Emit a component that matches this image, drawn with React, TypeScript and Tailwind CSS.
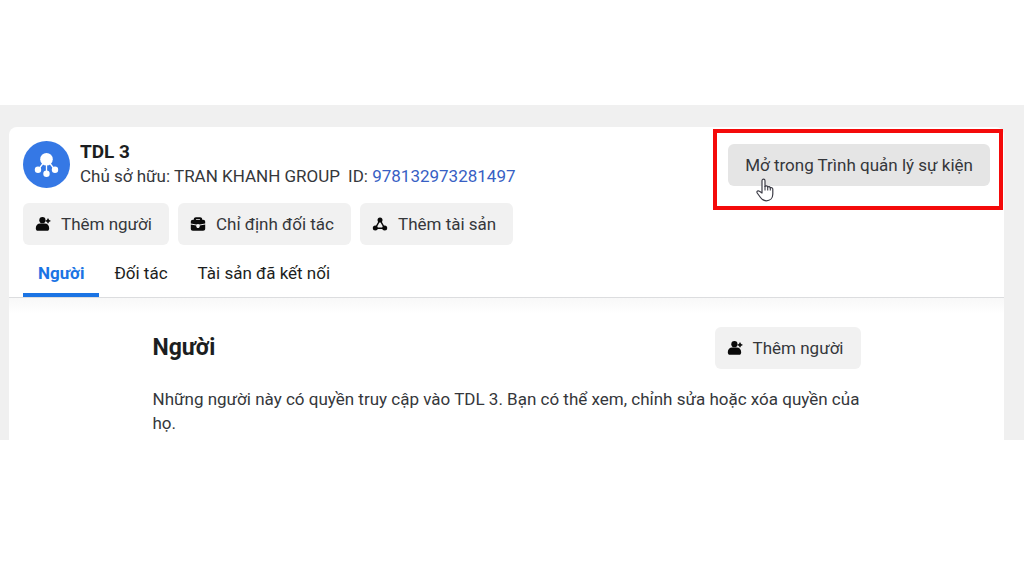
import type { ReactNode } from "react";

function AddPersonIcon() {
  return (
    <svg viewBox="0 0 16 16" className="h-4 w-4 shrink-0" fill="#0a0a0a" aria-hidden="true">
      <circle cx="7.4" cy="4.2" r="3.1" />
      <path d="M0.8 12.2c0-2.900 1.900-4.600 4.300-4.600h4.800c2.400 0 4.300 1.700 4.300 4.600 0 1.700-.8 2.600-2.200 2.600H3c-1.400 0-2.200-.9-2.200-2.600z" />
      <path d="M13 2.600l.8 1.500 1.600.8-1.600.8-.8 1.600-.8-1.600-1.600-.8 1.600-.8z" stroke="#0a0a0a" strokeWidth=".6" />
    </svg>
  );
}

function BriefcaseIcon() {
  return (
    <svg viewBox="0 0 16 16" className="h-4 w-4 shrink-0" fill="#0a0a0a" aria-hidden="true">
      <path
        fillRule="evenodd"
        d="M3.800 3.800V3.200C3.800 1.900 4.700 1.200 5.900 1.200h4.200c1.200 0 2.100.7 2.100 2v.6h.9c1.300 0 2.100.8 2.100 2v1.700L9.800 8.600 8 7.900l-1.800.7L.8 7.500V5.800c0-1.200.8-2 2.100-2zM5.900 3.800h4.200v-.3c0-.3-.2-.5-.5-.5H6.400c-.3 0-.5.2-.5.5z"
      />
      <path d="M.8 8.500l5.500 1.100v.8c0 .9.800 1.500 1.700 1.500s1.700-.6 1.700-1.500v-.8l5.500-1.100v4.200c0 1.200-.8 2-2.100 2H2.900c-1.300 0-2.100-.8-2.100-2z" />
    </svg>
  );
}

function AssetsIcon() {
  return (
    <svg viewBox="0 0 16 16" className="h-4 w-4 shrink-0" fill="#0a0a0a" aria-hidden="true">
      <path d="M8 4L3.400 12.200h9.200z" fill="none" stroke="#0a0a0a" strokeWidth="1.500" />
      <circle cx="8" cy="4" r="2.500" />
      <circle cx="3.300" cy="12.100" r="2.500" />
      <circle cx="12.700" cy="12.100" r="2.500" />
    </svg>
  );
}

function DatasetLogo() {
  return (
    <svg viewBox="0 0 47 47" className="h-[47px] w-[47px] shrink-0" aria-hidden="true">
      <circle cx="23.500" cy="23.500" r="23.500" fill="#3578e5" />
      <g stroke="#fff" strokeWidth="1.300">
        <path d="M23.500 18v15M23.500 18l-8.500 11M23.500 18l8.500 11" />
      </g>
      <g fill="#fff">
        <circle cx="23.500" cy="18.200" r="6.300" />
        <circle cx="15" cy="28.700" r="3.200" />
        <circle cx="23.500" cy="32.800" r="3.200" />
        <circle cx="32" cy="28.700" r="3.200" />
      </g>
    </svg>
  );
}

function HandPointer() {
  return (
    <svg
      viewBox="0 0 18 24"
      className="pointer-events-none absolute top-[34px] left-7 h-6 w-[18px]"
      aria-hidden="true"
    >
      <path
        d="M6 15V2.800C6 .6 9 .6 9 2.800V8.500c.6-1 2.500-.8 2.700.5.700-.8 2.300-.5 2.500.8.900-.6 2.600-.1 2.600 1.400V16c0 4-2.600 6.800-6.600 6.800-2.800 0-4.300-1.300-5.700-3.300L1.200 15c-.9-1.700.9-2.900 2.300-1.700z"
        fill="#fff"
        stroke="#3c3c46"
        strokeWidth="1.200"
        strokeLinejoin="round"
      />
      <path d="M9 8v4.500M11.700 9v3.500M14.300 9.800v2.700" stroke="#3c3c46" strokeWidth="1.100" />
    </svg>
  );
}

function ActionButton({ icon, children }: { icon: ReactNode; children: ReactNode }) {
  return (
    <button
      type="button"
      className="flex h-[42px] items-center gap-2.5 rounded-md bg-[#f1f1f1] pr-[17px] pl-3 text-[17px] whitespace-nowrap text-[#35373b]"
    >
      {icon}
      {children}
    </button>
  );
}

export default function App() {
  return (
    <div className="min-h-screen bg-white py-[105px] font-['Roboto','Liberation_Sans',sans-serif] text-[17px] leading-6 text-[#35373b]">
      <main className="bg-[#f0f0f0] pt-[22px] pr-5 pl-[9px]">
        <div className="rounded-t-lg bg-white">
          <header className="border-b border-[#dcdddf] pl-3.5">
            <div className="flex items-start justify-between">
              <div className="flex items-center gap-2.5 pt-[13px]">
                <DatasetLogo />
                <div>
                  <h1 className="text-[19px] leading-6 font-bold text-[#1c1e21]">TDL 3</h1>
                  <p className="flex gap-2">
                    <span>Chủ sở hữu: TRAN KHANH GROUP</span>
                    <span>
                      ID:{" "}
                      <a href="#dataset" className="text-[#385fc4]">
                        978132973281497
                      </a>
                    </span>
                  </p>
                </div>
              </div>
              <div className="mt-0.5 mr-px -mb-[13px] h-[81px] border-4 border-[#f40a0a] pt-[11px] pr-[9px] pl-[11px]">
                <div className="relative">
                  <button
                    type="button"
                    className="h-[42px] rounded-md bg-[#e5e5e5] px-[17px] whitespace-nowrap"
                  >
                    Mở trong Trình quản lý sự kiện
                  </button>
                  <HandPointer />
                </div>
              </div>
            </div>
            <div className="mt-1.5 flex gap-[9px]">
              <ActionButton icon={<AddPersonIcon />}>Thêm người</ActionButton>
              <ActionButton icon={<BriefcaseIcon />}>Chỉ định đối tác</ActionButton>
              <ActionButton icon={<AssetsIcon />}>Thêm tài sản</ActionButton>
            </div>
            <nav className="mt-1 flex h-12">
              <a
                href="#people"
                aria-current="page"
                className="flex items-center border-b-4 border-[#1b74e4] px-[15px] pt-1 font-bold text-[#1b74e4]"
              >
                Người
              </a>
              <a href="#partners" className="flex items-center px-[15px] text-[#1c1e21]">
                Đối tác
              </a>
              <a href="#assets" className="flex items-center px-[15px] text-[#1c1e21]">
                Tài sản đã kết nối
              </a>
            </nav>
          </header>
          <section className="bg-linear-to-b from-[#f8f8f8] to-white to-[16px] pt-[29px]">
            <div className="mx-auto max-w-[708px]">
              <div className="flex items-center justify-between">
                <h2 className="text-[23px] font-bold text-[#1c1e21]">Người</h2>
                <ActionButton icon={<AddPersonIcon />}>Thêm người</ActionButton>
              </div>
              <p className="pt-[18px] pb-[5px]">
                Những người này có quyền truy cập vào TDL 3. Bạn có thể xem, chỉnh sửa hoặc xóa quyền
                của họ.
              </p>
            </div>
          </section>
        </div>
      </main>
    </div>
  );
}
